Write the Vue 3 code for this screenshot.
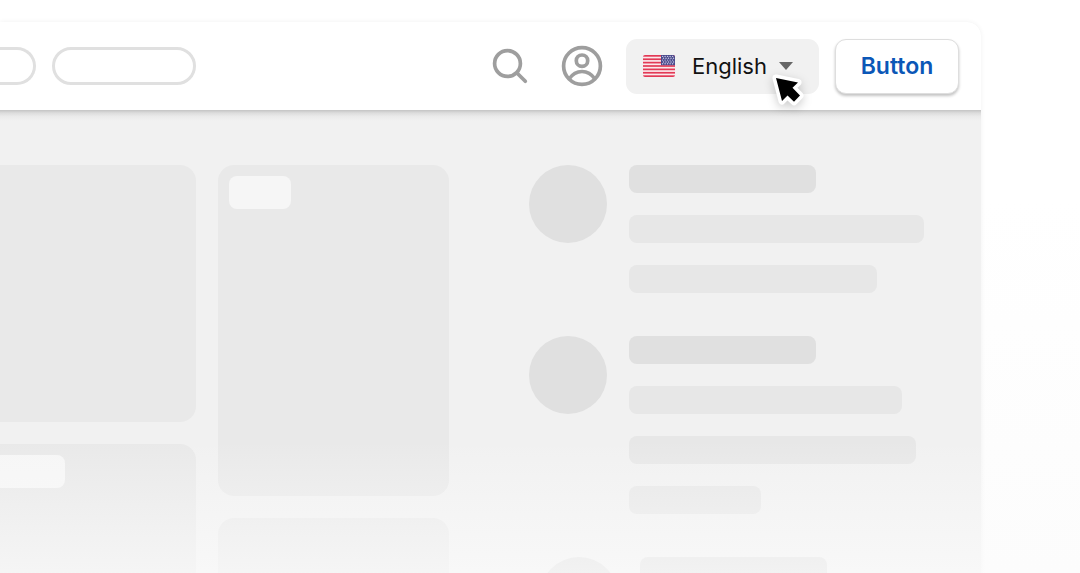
<script setup>
const entries = [
  { id: 1, bars: [187, 295, 248], indented: false },
  { id: 2, bars: [187, 273, 287, 132], indented: false },
  { id: 3, bars: [187, 273], indented: true },
]
const stripes = [0, 2, 4, 6, 8, 10, 12]
const stars = [0, 1, 2, 3, 4]
</script>

<template>
  <div class="page">
    <main class="window">
      <header class="topbar">
        <nav class="pills">
          <span class="pill pill-cut"></span>
          <span class="pill"></span>
        </nav>
        <div class="tools">
          <button class="icon-button search" type="button" aria-label="Search">
            <svg width="36" height="36" viewBox="0 0 36 36" fill="none" stroke="#9e9e9e" stroke-width="3.7" stroke-linecap="round">
              <circle cx="15.5" cy="15.5" r="12.9" />
              <path d="M25 25 33.3 33.3" />
            </svg>
          </button>
          <button class="icon-button account" type="button" aria-label="Account">
            <svg width="42" height="42" viewBox="0 0 42 42" fill="none" stroke="#9e9e9e" stroke-width="3.7">
              <circle cx="21" cy="21" r="18.4" />
              <circle cx="21" cy="15.7" r="5.7" />
              <path d="M8 34C11.5 29 16 26.5 21 26.5S30.5 29 34 34" />
            </svg>
          </button>
          <label class="language">
            <svg class="flag" width="32" height="22" viewBox="0 0 32 22" aria-hidden="true">
              <clipPath id="flag-shape"><rect width="32" height="22" rx="2" /></clipPath>
              <g clip-path="url(#flag-shape)">
                <rect width="32" height="22" fill="#fbe9ec" />
                <rect v-for="s in stripes" :key="s" :y="s * 1.692" width="32" height="1.692" fill="#e23a56" />
                <rect x="18" width="14" height="10.2" fill="#4a4a8c" />
                <g fill="#c8c8e4">
                  <template v-for="r in stars" :key="r">
                    <circle v-for="c in stars" :key="c" :cx="19.6 + c * 2.5 + (r % 2) * 0.9" :cy="1.4 + r * 1.85" r=".72" />
                  </template>
                </g>
              </g>
            </svg>
            <select class="language-select" aria-label="Language">
              <option>English</option>
            </select>
            <svg class="caret" width="14" height="8" viewBox="0 0 14 8" aria-hidden="true"><path d="M0 0H14L7 8Z" fill="#666" /></svg>
            <svg class="pointer" width="44" height="44" viewBox="0 0 44 44" aria-hidden="true">
              <path d="M8 6 30 10.5 24.5 15.8 32 23.5 26 29.8 19.5 23.6 14 29Z" fill="#000" stroke="#fff" stroke-width="7" stroke-linejoin="round" paint-order="stroke" />
            </svg>
          </label>
          <button class="action" type="button">Button</button>
        </div>
      </header>

      <section class="content">
        <div class="column">
          <div class="card card-short"></div>
          <div class="card card-wide-chip"><div class="chip chip-wide"></div></div>
        </div>
        <div class="column">
          <div class="card card-tall"><div class="chip"></div></div>
          <div class="card"></div>
        </div>
        <div class="feed">
          <article v-for="entry in entries" :key="entry.id" class="entry" :class="{ indented: entry.indented }">
            <div class="avatar"></div>
            <div class="bars">
              <div v-for="(w, i) in entry.bars" :key="i" class="bar" :style="{ width: w + 'px' }"></div>
            </div>
          </article>
        </div>
      </section>
    </main>
    <div class="fade"></div>
  </div>
</template>

<style scoped>
.page {
  position: relative;
  box-sizing: border-box;
  height: 100vh;
  padding: 22px 99px 0 0;
  overflow: hidden;
  background: linear-gradient(#fff 35%, #fcfcfc);
  font-family: Inter, "Liberation Sans", sans-serif;
}
.window {
  border-radius: 0 14px 0 0;
  background: #f1f1f1;
  box-shadow: 0 0 5px rgba(0, 0, 0, 0.06);
}
.topbar {
  position: relative;
  display: flex;
  align-items: center;
  justify-content: space-between;
  box-sizing: border-box;
  height: 88px;
  padding-right: 22px;
  border-radius: 0 14px 0 0;
  background: #fff;
}
.topbar::after {
  content: "";
  position: absolute;
  top: 100%;
  left: 0;
  right: 0;
  height: 11px;
  background: linear-gradient(#c4c4c4, #dddddd 28%, #ebebeb 60%, #f1f1f1);
}
.pills {
  display: flex;
  gap: 16px;
}
.pill {
  box-sizing: border-box;
  width: 144px;
  height: 38px;
  border: 3px solid #e0e0e0;
  border-radius: 19px;
}
.pill-cut {
  width: 36px;
  border-left: 0;
  border-radius: 0 19px 19px 0;
}
.tools {
  display: flex;
  align-items: center;
}
.icon-button {
  display: flex;
  padding: 0;
  border: 0;
  background: none;
}
.search {
  margin-right: 33px;
}
.account {
  margin-right: 23px;
}
.language {
  position: relative;
  display: flex;
  align-items: center;
  box-sizing: border-box;
  width: 193px;
  height: 55px;
  margin-right: 16px;
  padding: 0 26px 0 17px;
  border-radius: 11px;
  background: #f1f1f1;
}
.flag {
  margin-right: 17px;
}
.language-select {
  flex: 1;
  min-width: 0;
  padding: 0;
  border: 0;
  appearance: none;
  background: none;
  color: #111;
  font: 400 22px/30px Inter, "Liberation Sans", sans-serif;
}
.pointer {
  position: absolute;
  top: 33px;
  left: 142px;
  overflow: visible;
  filter: drop-shadow(0 3px 5px rgba(0, 0, 0, 0.2));
  z-index: 1;
}
.action {
  box-sizing: border-box;
  width: 124px;
  height: 55px;
  padding: 0;
  border: 1px solid #dedede;
  border-radius: 11px;
  background: #fff;
  box-shadow: 0 2px 3px rgba(0, 0, 0, 0.24);
  color: #0b57b7;
  font: 600 23px/30px Inter, "Liberation Sans", sans-serif;
}
.content {
  display: grid;
  grid-template-columns: 196fr 231fr 510fr;
  gap: 22px;
  padding-top: 55px;
}
.column {
  display: flex;
  flex-direction: column;
  gap: 22px;
}
.card {
  box-sizing: border-box;
  min-height: 257px;
  padding: 11px;
  border-radius: 16px;
  background: #e9e9e9;
}
.column:first-child .card {
  border-radius: 0 16px 16px 0;
}
.card-tall {
  min-height: 331px;
}
.column .card-wide-chip {
  padding-left: 0;
}
.chip {
  width: 62px;
  height: 33px;
  border-radius: 8px;
  background: #f6f6f6;
}
.chip-wide {
  width: 65px;
  border-radius: 0 8px 8px 0;
}
.feed {
  display: flex;
  flex-direction: column;
  gap: 43px;
  padding-left: 58px;
}
.entry {
  display: flex;
  gap: 22px;
}
.indented {
  padding-left: 11px;
}
.avatar {
  flex: none;
  width: 78px;
  height: 78px;
  border-radius: 50%;
  background: #e0e0e0;
}
.bars {
  display: flex;
  flex: 1;
  flex-direction: column;
  gap: 22px;
}
.bar {
  max-width: 100%;
  height: 28px;
  border-radius: 8px;
  background: #e7e7e7;
}
.bar:first-child {
  background: #e0e0e0;
}
.fade {
  position: absolute;
  right: 0;
  bottom: 0;
  left: 0;
  height: 133px;
  background: linear-gradient(rgba(252, 252, 252, 0), rgba(252, 252, 252, 0.64));
}
</style>

<style>
body {
  margin: 0;
}
</style>
